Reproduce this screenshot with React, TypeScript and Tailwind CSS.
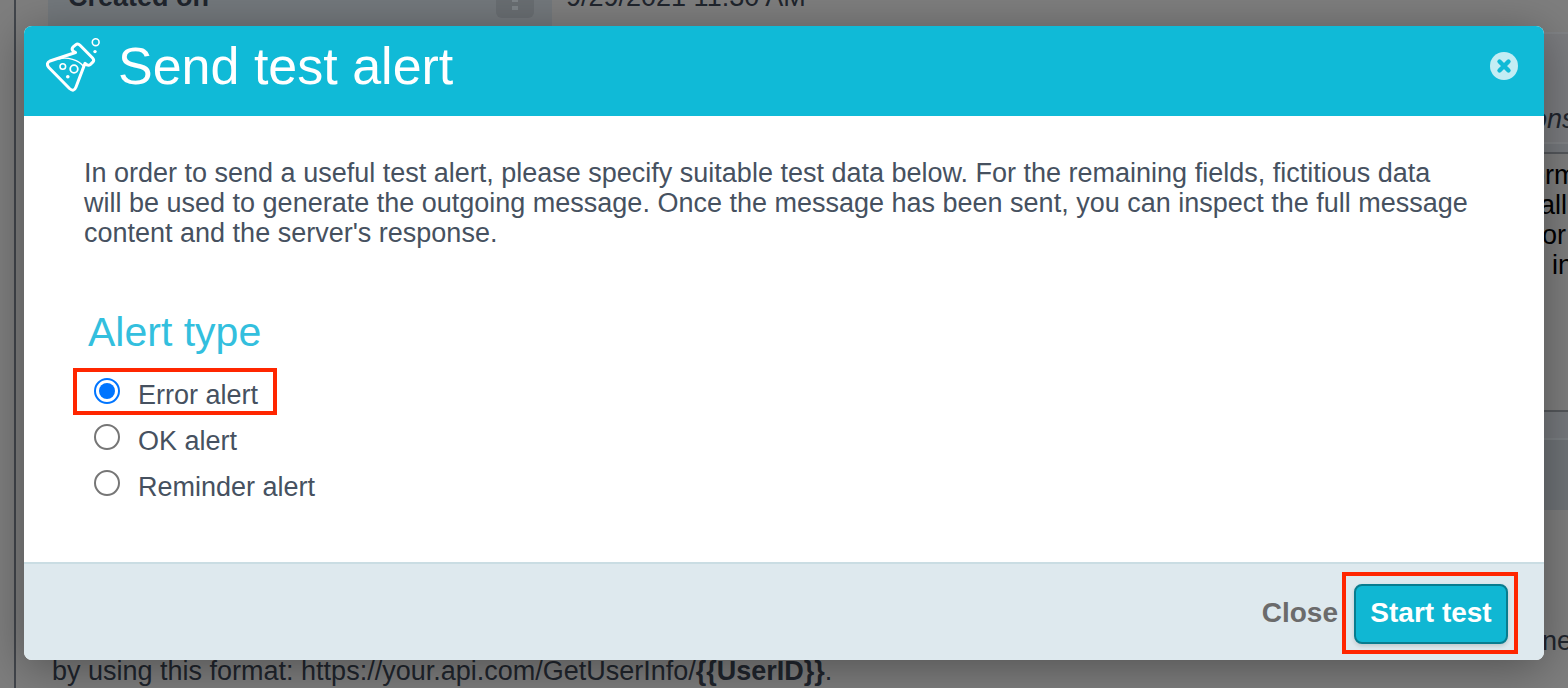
import { useState } from "react";

const alertTypes = [
  { id: "error", label: "Error alert", highlighted: true },
  { id: "ok", label: "OK alert", highlighted: false },
  { id: "reminder", label: "Reminder alert", highlighted: false },
];

function FlaskIcon() {
  return (
    <svg
      viewBox="0 0 56 56"
      className="h-14 w-14"
      fill="none"
      stroke="white"
      strokeLinecap="round"
      strokeLinejoin="round"
      aria-hidden="true"
    >
      <path
        d="M29.5 14.5 L27 13 Q25.2 11 27.2 8.8 L29.6 6.8 Q31.8 5 34 7.2 L46.6 20 Q48.6 22.2 46.8 24.2 L44.2 26.6 Q42 28.4 39 25.4 L30 49 Q28 54.5 23.5 50.5 L2.6 29.2 Q-0.4 25 4 23 L29.5 14.5"
        strokeWidth="3"
      />
      <path d="M13 21 C21 18.5 33 22 37.5 28.5" strokeWidth="1.4" />
      <circle cx="16.8" cy="28.5" r="2.8" strokeWidth="1.6" />
      <circle cx="28" cy="31" r="3.8" strokeWidth="1.8" />
      <circle cx="21.8" cy="38.8" r="1.8" fill="white" stroke="none" />
      <circle cx="49.7" cy="4.2" r="3.4" strokeWidth="1.6" />
      <circle cx="49" cy="13.6" r="1.7" fill="white" stroke="none" />
    </svg>
  );
}

function CloseIcon() {
  return (
    <svg viewBox="0 0 28 28" className="h-7 w-7" aria-hidden="true">
      <circle cx="14" cy="14" r="14" fill="#c3edf4" />
      <path d="M9.5 9.5 L18.5 18.5 M18.5 9.5 L9.5 18.5" stroke="#10bad7" strokeWidth="4.4" strokeLinecap="round" />
    </svg>
  );
}

function Highlight({ className }: { className: string }) {
  return (
    <span aria-hidden="true" className={`pointer-events-none absolute border-4 border-[#ff2600] ${className}`} />
  );
}

function PageBehind() {
  return (
    <div aria-hidden="true" className="absolute inset-0 flex overflow-hidden bg-[#7e7e7e] pl-3.5 text-[27px] leading-[30px] text-[#20252d]">
      <div className="flex min-w-0 flex-1 flex-col border-l-2 border-[#42464c]">
        <div className="flex h-8 shrink-0 pl-8">
          <div className="flex w-[504px] items-end justify-between bg-[#73787c] pr-[18px] pl-5">
            <span className="mb-5 font-bold">Created on</span>
            <span className="mb-3.5 flex h-9 w-[38px] flex-col items-center justify-end gap-1 rounded-md bg-[#696e72] pb-2">
              <span className="h-1.5 w-1.5 bg-[#7e8488]" />
              <span className="h-1 w-1.5 bg-[#7e8488]" />
            </span>
          </div>
          <span className="mb-5 self-end pl-3.5">9/29/2021 11:30 AM</span>
        </div>
        <div className="flex flex-1 justify-end">
          <div className="flex w-[38px] flex-col whitespace-nowrap">
            <div className="flex h-[112px] flex-col justify-end border-y-2 border-[#818386] bg-[#7b7c7f] pb-2">
              <span className="pl-0.5 italic">ons</span>
            </div>
            <div className="h-2 bg-[#76797d]" />
            <div className="flex h-[260px] flex-col border-y-2 border-[#55585c] pt-1.5 text-black">
              <span>orm</span>
              <span className="pl-2.5">all</span>
              <span className="pl-3">or</span>
              <span className="pl-[22px]">in</span>
            </div>
            <div className="h-[26px] bg-[#76797d]" />
            <div className="h-[72px] border-t-2 border-[#7c8084] bg-[#6f7377]" />
            <span className="pt-[116px] pl-3">ne</span>
          </div>
        </div>
        <p className="shrink-0 pb-1 pl-9 whitespace-nowrap">
          by using this format: https://your.api.com/GetUserInfo/<b>{"{{UserID}}"}</b>.
        </p>
      </div>
    </div>
  );
}

export default function App() {
  const [selected, setSelected] = useState("error");

  return (
    <div className="relative min-h-screen overflow-hidden px-6 pt-[26px] pb-7 font-['Liberation_Sans',Arial,sans-serif]">
      <PageBehind />
      <div
        role="dialog"
        aria-modal="true"
        aria-labelledby="dialog-title"
        className="relative overflow-hidden rounded-lg bg-white text-[27px] leading-[30px] text-[#465160] shadow-[0_8px_48px_rgba(0,0,0,0.35)]"
      >
        <header className="flex h-[90px] items-start justify-between bg-[#10bad7] pt-3 pr-[26px] pl-[22px]">
          <div className="flex gap-4">
            <FlaskIcon />
            <h1 id="dialog-title" className="text-[52px] leading-14 text-white">
              Send test alert
            </h1>
          </div>
          <button type="button" aria-label="Close dialog" className="mt-3.5">
            <CloseIcon />
          </button>
        </header>

        <main className="px-[60px] pt-[42px] pb-[60px]">
          <p className="pr-3">
            In order to send a useful test alert, please specify suitable test data below. For the remaining fields,
            fictitious data will be used to generate the outgoing message. Once the message has been sent, you can
            inspect the full message content and the server's response.
          </p>
          <fieldset className="mt-[60px]">
            <legend className="pl-1 text-[41px] leading-12 text-[#33bfde]">Alert type</legend>
            <div className="mt-[22px] flex flex-col items-start gap-3.5">
              {alertTypes.map(({ id, label, highlighted }) => (
                <label key={id} className="relative flex items-start pl-2.5">
                  <input
                    type="radio"
                    name="alert-type"
                    value={id}
                    checked={selected === id}
                    onChange={() => setSelected(id)}
                    className="size-[26px] appearance-none rounded-full border-2 border-[#767676] bg-clip-content p-[3px] checked:border-[#0075ff] checked:bg-[#0075ff]"
                  />
                  <span className="pt-0.5 pl-[18px]">{label}</span>
                  {highlighted && <Highlight className="-top-2.5 -right-[19px] -bottom-[5px] -left-[11px]" />}
                </label>
              ))}
            </div>
          </fieldset>
        </main>

        <footer className="flex items-start justify-end gap-4 border-t-2 border-[#cadde3] bg-[#dee9ee] pt-5 pr-9 pb-4 text-[28px] font-bold">
          <button type="button" className="h-[60px] pb-0.5 text-[#6b6b6b]">
            Close
          </button>
          <div className="relative">
            <button
              type="button"
              className="h-[60px] min-w-[154px] rounded-lg border-2 border-[#087c8f] bg-[#10b7d3] px-3.5 pb-0.5 text-white shadow-[0_2px_4px_rgba(0,0,0,0.15)]"
            >
              Start test
            </button>
            <Highlight className="-top-3 -right-2.5 -bottom-2.5 -left-3" />
          </div>
        </footer>
      </div>
    </div>
  );
}
